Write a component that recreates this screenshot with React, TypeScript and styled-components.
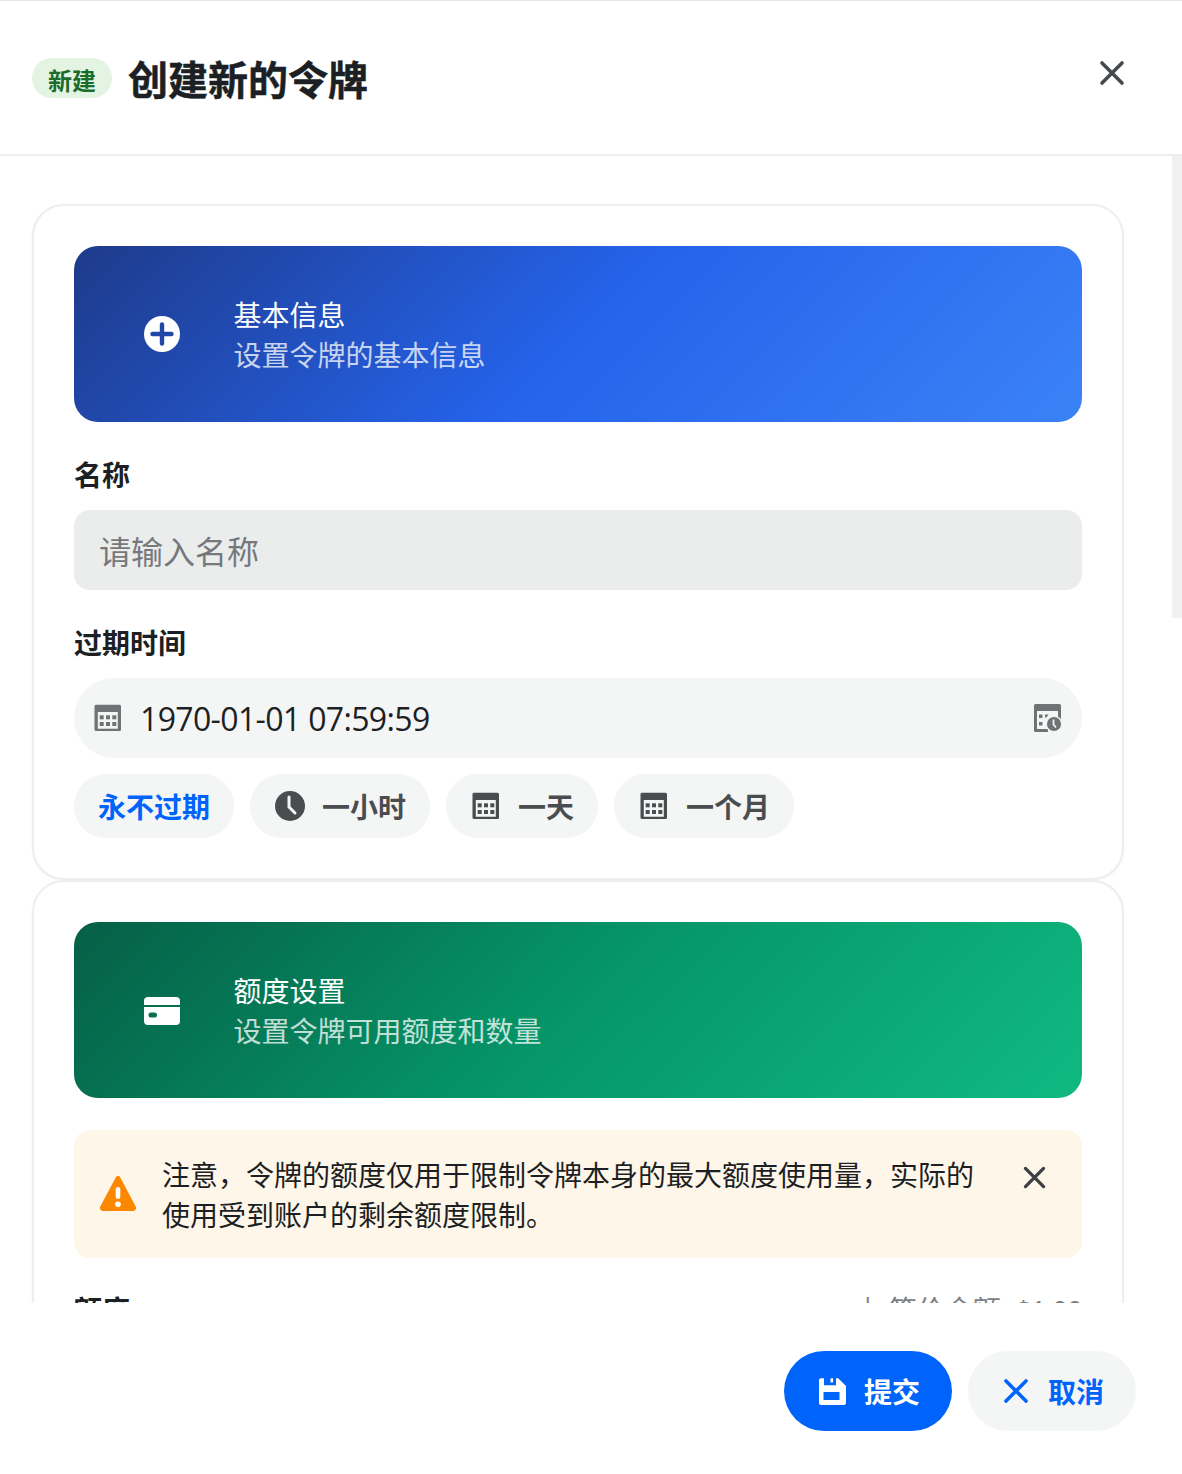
import React from 'react';
import styled, { createGlobalStyle } from 'styled-components';

const GlobalStyle = createGlobalStyle`
  html, body {
    margin: 0;
    padding: 0;
    background: #ffffff;
  }
  body {
    font-family: "Inter", "Noto Sans CJK SC", sans-serif;
    color: #1c1f23;
  }
`;

const Sheet = styled.div`
  width: 1182px;
  height: 1474px;
  display: flex;
  flex-direction: column;
  overflow: hidden;
  position: relative;
  border-top: 1px solid #e6e6e6;
  box-sizing: border-box;
`;

const Header = styled.header`
  flex: 0 0 155px;
  box-sizing: border-box;
  border-bottom: 2px solid #eeeeef;
  display: flex;
  align-items: center;
  padding: 0 54px 0 32px;
`;

const Badge = styled.span`
  width: 80px;
  height: 40px;
  box-sizing: border-box;
  padding-top: 2px;
  border-radius: 20px;
  background: #e3f4e3;
  color: #1b6b2a;
  font-size: 24px;
  font-weight: 700;
  display: flex;
  align-items: center;
  justify-content: center;
  margin-right: 16px;
  margin-top: 1px;
`;

const Title = styled.h1`
  margin: 0;
  padding-top: 7px;
  font-size: 40px;
  line-height: 56px;
  font-weight: 700;
  color: #1c1f23;
  flex: 1;
  -webkit-text-stroke: 0.5px #1c1f23;
`;

const CloseButton = styled.button`
  border: none;
  background: none;
  padding: 0;
  width: 32px;
  height: 32px;
  color: #46494d;
  display: flex;
  margin-top: -9px;
`;

const Body = styled.main`
  flex: 1;
  min-height: 0;
  overflow: hidden;
  padding: 48px 58px 0 32px;
  position: relative;
`;

const ScrollThumb = styled.div`
  position: absolute;
  top: 0;
  right: 0;
  width: 10px;
  height: 462px;
  background: #f1f1f1;
`;

const Card = styled.section`
  box-sizing: border-box;
  border: 2px solid #eeeeef;
  border-radius: 32px;
  padding: 40px;
  box-shadow: 0 1px 3px rgba(0, 0, 0, 0.04);
`;

const Banner = styled.div<{ $from: string; $mid: string; $to: string }>`
  height: 176px;
  border-radius: 24px;
  display: flex;
  align-items: center;
  padding-left: 68px;
  color: #ffffff;
  background: linear-gradient(135deg, ${(p) => p.$from} 0%, ${(p) => p.$mid} 50%, ${(p) => p.$to} 100%);
`;

const BannerIcon = styled.div`
  width: 40px;
  height: 40px;
  margin-right: 51.5px;
  display: flex;
  align-items: center;
  justify-content: center;
`;

const BannerText = styled.div`
  padding-top: 4px;
`;

const BannerTitle = styled.div`
  font-size: 28px;
  line-height: 40px;
`;

const BannerSub = styled.div`
  font-size: 28px;
  line-height: 40px;
  opacity: 0.75;
`;

const FieldLabel = styled.label`
  display: block;
  font-size: 28px;
  line-height: 40px;
  font-weight: 700;
  color: #1c1f23;
  margin: 34px 0 14px;
`;

const NameInput = styled.div`
  height: 80px;
  box-sizing: border-box;
  border-radius: 16px;
  background: #ebecec;
  color: #76797c;
  font-size: 32px;
  display: flex;
  align-items: center;
  padding: 0 25px;
`;

const DateInput = styled.div`
  height: 80px;
  box-sizing: border-box;
  border-radius: 40px;
  background: #f4f5f5;
  display: flex;
  align-items: center;
  padding: 0 18px;
  font-size: 32px;
  color: #1c1f23;
`;

const DateValue = styled.span`
  flex: 1;
  margin-left: 16px;
  font-family: "Open Sans", "Noto Sans CJK SC", sans-serif;
  letter-spacing: -0.65px;
`;

const Presets = styled.div`
  display: flex;
  gap: 16px;
  margin-top: 16px;
`;

const Preset = styled.button<{ $active?: boolean }>`
  height: 64px;
  border: none;
  border-radius: 32px;
  background: #f4f5f5;
  padding: 0 24px;
  display: flex;
  align-items: center;
  gap: 16px;
  font-family: inherit;
  font-size: 28px;
  font-weight: 700;
  color: ${(p) => (p.$active ? '#0064fa' : '#4a4d50')};
`;

const SecondCard = styled(Card)`
  padding-bottom: 200px;
`;

const Notice = styled.div`
  margin-top: 32px;
  height: 128px;
  box-sizing: border-box;
  border-radius: 16px;
  background: #fff6ea;
  display: flex;
  align-items: flex-start;
  padding: 26px 24px 0 24px;
`;

const NoticeIcon = styled.div`
  width: 40px;
  height: 40px;
  margin: 18px 24px 0 0;
  color: #fc8800;
`;

const NoticeText = styled.div`
  width: 820px;
  font-size: 28px;
  line-height: 40px;
  color: #1c1f23;
`;

const NoticeClose = styled.div`
  margin: 5px 0 0 36px;
  width: 32px;
  height: 32px;
  color: #3b3e42;
  display: flex;
  align-items: center;
  justify-content: center;
`;

const AmountRow = styled.div`
  display: flex;
  align-items: flex-start;
  justify-content: space-between;
  margin-top: 33px;
`;

const AmountLabel = styled.span`
  font-size: 28px;
  line-height: 40px;
  font-weight: 700;
`;

const AmountHint = styled.span`
  font-family: "Open Sans", "Noto Sans CJK SC", sans-serif;
  font-size: 28px;
  line-height: 38px;
  color: #7d8083;
`;

const HintValue = styled.span`
  letter-spacing: -1px;
`;

const Footer = styled.footer`
  flex: 0 0 171px;
  box-sizing: border-box;
  display: flex;
  justify-content: flex-end;
  gap: 16px;
  padding: 48px 46px 0 0;
  background: #ffffff;
`;

const ActionButton = styled.button<{ $primary?: boolean }>`
  height: 80px;
  width: 168px;
  border: none;
  border-radius: 40px;
  display: flex;
  align-items: center;
  justify-content: center;
  gap: 16px;
  font-family: inherit;
  font-size: 28px;
  font-weight: 700;
  background: ${(p) => (p.$primary ? '#0064fa' : '#f4f5f5')};
  color: ${(p) => (p.$primary ? '#ffffff' : '#0064fa')};
`;

const CloseIcon = ({ size = 32 }: { size?: number }) => (
  <svg width={size} height={size} viewBox="0 0 32 32" fill="none">
    <path d="M6 6L26 26M26 6L6 26" stroke="currentColor" strokeWidth="3.6" strokeLinecap="round" />
  </svg>
);

const CalendarIcon = ({ color = '#4a4d50' }: { color?: string }) => (
  <svg width="32" height="32" viewBox="0 0 32 32">
    <path
      fillRule="evenodd"
      fill={color}
      d="M4 2.7h23.5a1.5 1.5 0 0 1 1.5 1.5v23.3a1.5 1.5 0 0 1-1.5 1.5H4a1.5 1.5 0 0 1-1.5-1.5V4.2A1.5 1.5 0 0 1 4 2.7zM5.8 10v16.7h20V10z"
    />
    {[7.7, 14, 20.3].map((x) =>
      [13.3, 20].map((y) => <rect key={`${x}-${y}`} x={x} y={y} width="4" height="4" fill={color} />),
    )}
  </svg>
);

const CalendarClockIcon = () => (
  <svg width="32" height="32" viewBox="0 0 32 32">
    <path
      fill="#707376"
      d="M3.5 2h24A1.5 1.5 0 0 1 29 3.5V17h-3V9H5v18h11v3H3.5A1.5 1.5 0 0 1 2 28.500V3.500A1.500 1.500 0 0 1 3.500 2z"
    />
    <rect x="7" y="12.500" width="3.500" height="3.500" fill="#707376" />
    <rect x="7" y="20" width="3.500" height="3.500" fill="#707376" />
    <path d="M13 12.500h3.500l-2 3H13z" fill="#707376" />
    <circle cx="22" cy="22" r="7.800" fill="#707376" stroke="#f4f5f5" strokeWidth="1.500" />
    <path d="M21.500 17.500v5l2.500 3" stroke="#f4f5f5" strokeWidth="1.800" fill="none" />
  </svg>
);

const ClockIcon = () => (
  <svg width="32" height="32" viewBox="0 0 32 32">
    <circle cx="16" cy="16" r="15" fill="#4a4d50" />
    <path d="M15 7v10l6 6" stroke="#f4f5f5" strokeWidth="3" fill="none" strokeLinecap="round" />
  </svg>
);

const PlusCircleIcon = () => (
  <svg width="40" height="40" viewBox="0 0 40 40">
    <circle cx="20" cy="20" r="18" fill="#ffffff" />
    <path d="M20 10.500v19M10.500 20h19" stroke="#1f47a8" strokeWidth="4.400" strokeLinecap="round" />
  </svg>
);

const CreditCardIcon = () => (
  <svg width="40" height="40" viewBox="0 0 40 40">
    <path fill="#ffffff" d="M6 7h28a4 4 0 0 1 4 4v4H2v-4a4 4 0 0 1 4-4z" />
    <path
      fill="#ffffff"
      fillRule="evenodd"
      d="M2 17h36v14a4 4 0 0 1-4 4H6a4 4 0 0 1-4-4zM9 22.500a2.500 2.500 0 0 0 0 5h3.500a2.500 2.500 0 0 0 0-5z"
    />
  </svg>
);

const WarningIcon = () => (
  <svg width="40" height="40" viewBox="0 0 40 40">
    <path
      fill="currentColor"
      d="M17.700 3.400a2.700 2.700 0 0 1 4.600 0l15.400 29.200a3 3 0 0 1-2.600 4.400H4.900a3 3 0 0 1-2.600-4.400z"
    />
    <rect x="17.700" y="13" width="4.600" height="12" rx="2.300" fill="#ffffff" />
    <circle cx="20" cy="30.300" r="2.800" fill="#ffffff" />
  </svg>
);

const SaveIcon = () => (
  <svg width="32" height="32" viewBox="0 0 32 32">
    <path
      fill="#ffffff"
      fillRule="evenodd"
      d="M5 3.300h3v7h12v-7h2.200L30 11v17a2 2 0 0 1-2 2H5a2 2 0 0 1-2-2V5.300a2 2 0 0 1 2-2zM7.500 17v8h16v-8z"
    />
    <rect x="14.500" y="3.300" width="2.600" height="4.200" fill="#ffffff" />
  </svg>
);

export default function App() {
  return (
    <>
      <GlobalStyle />
      <Sheet>
        <Header>
          <Badge>新建</Badge>
          <Title>创建新的令牌</Title>
          <CloseButton>
            <CloseIcon />
          </CloseButton>
        </Header>
        <Body>
          <ScrollThumb />
          <Card>
            <Banner $from="#1e3a8a" $mid="#2563eb" $to="#3b82f6">
              <BannerIcon>
                <PlusCircleIcon />
              </BannerIcon>
              <BannerText>
                <BannerTitle>基本信息</BannerTitle>
                <BannerSub>设置令牌的基本信息</BannerSub>
              </BannerText>
            </Banner>
            <FieldLabel>名称</FieldLabel>
            <NameInput>请输入名称</NameInput>
            <FieldLabel>过期时间</FieldLabel>
            <DateInput>
              <CalendarIcon color="#707376" />
              <DateValue>1970-01-01 07:59:59</DateValue>
              <CalendarClockIcon />
            </DateInput>
            <Presets>
              <Preset $active>永不过期</Preset>
              <Preset>
                <ClockIcon />
                一小时
              </Preset>
              <Preset>
                <CalendarIcon />
                一天
              </Preset>
              <Preset>
                <CalendarIcon />
                一个月
              </Preset>
            </Presets>
          </Card>
          <SecondCard>
            <Banner $from="#065f46" $mid="#059669" $to="#10b981">
              <BannerIcon>
                <CreditCardIcon />
              </BannerIcon>
              <BannerText>
                <BannerTitle>额度设置</BannerTitle>
                <BannerSub>设置令牌可用额度和数量</BannerSub>
              </BannerText>
            </Banner>
            <Notice>
              <NoticeIcon>
                <WarningIcon />
              </NoticeIcon>
              <NoticeText>注意，令牌的额度仅用于限制令牌本身的最大额度使用量，实际的使用受到账户的剩余额度限制。</NoticeText>
              <NoticeClose>
                <CloseIcon size={29} />
              </NoticeClose>
            </Notice>
            <AmountRow>
              <AmountLabel>额度</AmountLabel>
              <AmountHint>
                ↓ 等价金额: <HintValue>$1.00</HintValue>
              </AmountHint>
            </AmountRow>
          </SecondCard>
        </Body>
        <Footer>
          <ActionButton $primary>
            <SaveIcon />
            提交
          </ActionButton>
          <ActionButton>
            <CloseIcon />
            取消
          </ActionButton>
        </Footer>
      </Sheet>
    </>
  );
}
